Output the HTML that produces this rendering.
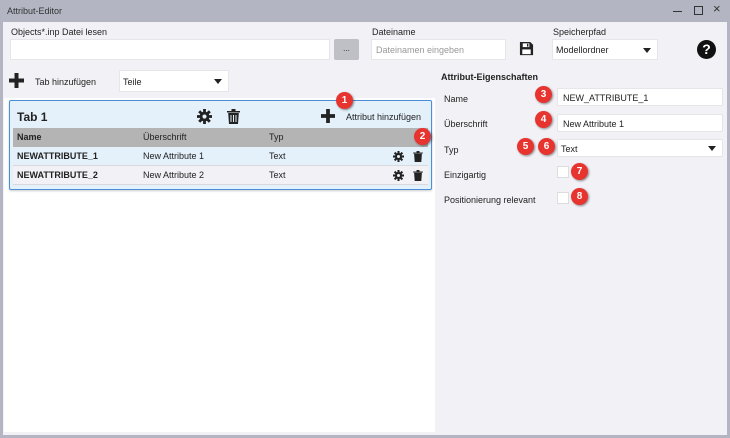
<!DOCTYPE html>
<html><head><meta charset="utf-8"><style>
*{box-sizing:border-box;margin:0;padding:0}
body{width:730px;height:438px;overflow:hidden;font-family:"Liberation Sans",sans-serif;font-size:9px;color:#222;background:#6b6f7a}
.win{position:absolute;left:0;top:0;width:730px;height:438px;background:#b3b6c2;}
.in{position:absolute;left:3px;top:22px;width:724px;height:413px;background:#f2f1f6}
.a{position:absolute}
.inp{position:absolute;background:#fff;border:1px solid #e6e6ea}
.arr{position:absolute;right:6px;top:50%;margin-top:-2px;width:0;height:0;border-left:4px solid transparent;border-right:4px solid transparent;border-top:5px solid #222}
.badge{position:absolute;width:17px;height:17px;border-radius:50%;background:#e8342f;color:#fff;font-weight:bold;font-size:10px;text-align:center;line-height:17px;box-shadow:1px 1px 2px rgba(0,0,0,.45)}
.cb{position:absolute;width:12px;height:12px;background:#fff;border:1px solid #ddd}
.row{position:absolute;left:13px;width:415px;height:19px;line-height:19px;border-bottom:1px solid #d8d8de}
.row span{position:absolute}
</style></head><body>
<div class="win">
<div class="a" style="left:7px;top:6px;font-size:9px;color:#333">Attribut-Editor</div>
<div class="a" style="left:673px;top:11px;width:9px;height:1px;background:#333"></div>
<div class="a" style="left:694px;top:6px;width:9px;height:9px;border:1px solid #333"></div>
<div class="a" style="left:713px;top:1px;font-size:13px;color:#333">×</div>
<div class="in">
<div class="a" style="left:8px;top:5px">Objects*.inp Datei lesen</div>
<div class="inp" style="left:7px;top:17px;width:320px;height:21px"></div>
<div class="a" style="left:331px;top:17px;width:25px;height:21px;background:#bfc0c6;border-radius:2px;text-align:center;line-height:19px;font-size:8px">...</div>
<div class="a" style="left:369px;top:5px">Dateiname</div>
<div class="inp" style="left:368px;top:17px;width:135px;height:21px;color:#999;padding:5px 4px">Dateinamen eingeben</div>
<svg class="a" style="left:516px;top:19px" width="15" height="15" viewBox="0 0 16 16"><path d="M1 1h11l3 3v11H1z" fill="#222"/><rect x="4" y="2.5" width="7" height="4" fill="#fff"/><rect x="8.5" y="3" width="1.5" height="3" fill="#222"/><rect x="3.5" y="9" width="9" height="5" fill="#fff"/></svg>
<div class="a" style="left:550px;top:5px">Speicherpfad</div>
<div class="inp" style="left:549px;top:17px;width:106px;height:21px;padding:5px 3px">Modellordner<span class="arr"></span></div>
<div class="a" style="left:694px;top:18px;width:19px;height:19px;border-radius:50%;background:#111;color:#fff;font-weight:bold;font-size:14px;text-align:center;line-height:19px">?</div>

<svg class="a" style="left:6px;top:51px" width="15" height="15" viewBox="0 0 15 15"><path d="M5.5 0h4v5.5H15v4H9.5V15h-4V9.5H0v-4h5.5z" fill="#222"/></svg>
<div class="a" style="left:32px;top:55px">Tab hinzufügen</div>
<div class="inp" style="left:116px;top:48px;width:110px;height:22px;padding:6px 3px">Teile<span class="arr"></span></div>

<div class="a" style="left:1px;top:76px;width:431px;height:334px;background:#fff"></div>
<div class="a" style="left:6px;top:78px;width:423px;height:90px;background:#e4f1fb;border:1px solid #4a8fd6;border-radius:2px;box-shadow:0 1px 2px rgba(0,0,0,.2)"></div>
<div class="a" style="left:14px;top:88px;font-size:12px;font-weight:bold">Tab 1</div>
<svg class="a" style="left:194px;top:87px" width="15" height="15" viewBox="0 0 16 16"><g fill="#222"><circle cx="8" cy="8" r="5.2"/><rect x="6.5" y="0" width="3" height="16"/><rect x="0" y="6.5" width="16" height="3"/><rect x="6.5" y="0" width="3" height="16" transform="rotate(45 8 8)"/><rect x="0" y="6.5" width="16" height="3" transform="rotate(45 8 8)"/></g><circle cx="8" cy="8" r="2.2" fill="#e4f1fb"/></svg>
<svg class="a" style="left:224px;top:87px" width="13" height="15" viewBox="0 0 13 15"><path d="M0 2h13v1.5H0zM4.5 0h4v2h-4zM1.2 4h10.6l-.8 11H2z" fill="#222"/><path d="M4 6v7M6.5 6v7M9 6v7" stroke="#e4f1fb" stroke-width="1"/></svg>
<svg class="a" style="left:318px;top:87px" width="14" height="14" viewBox="0 0 15 15"><path d="M5.5 0h4v5.5H15v4H9.5V15h-4V9.5H0v-4h5.5z" fill="#222"/></svg>
<div class="a" style="left:343px;top:90px">Attribut hinzufügen</div>
<div class="a" style="left:10px;top:106px;width:415px;height:19px;background:#b4b4b4"></div>
<div class="a" style="left:14px;top:110px;font-weight:bold">Name</div>
<div class="a" style="left:140px;top:110px">Überschrift</div>
<div class="a" style="left:266px;top:110px">Typ</div>
<div class="row" style="left:10px;top:125px;background:#e4f1fb"><span style="left:4px;font-weight:bold">NEWATTRIBUTE_1</span><span style="left:130px">New Attribute 1</span><span style="left:256px">Text</span></div>
<div class="row" style="left:10px;top:144px;background:#f1f1f6"><span style="left:4px;font-weight:bold">NEWATTRIBUTE_2</span><span style="left:130px">New Attribute 2</span><span style="left:256px">Text</span></div>
<svg class="a" style="left:390px;top:129px" width="11" height="11" viewBox="0 0 16 16"><g fill="#222"><circle cx="8" cy="8" r="5.2"/><rect x="6.5" y="0" width="3" height="16"/><rect x="0" y="6.5" width="16" height="3"/><rect x="6.5" y="0" width="3" height="16" transform="rotate(45 8 8)"/><rect x="0" y="6.5" width="16" height="3" transform="rotate(45 8 8)"/></g><circle cx="8" cy="8" r="2.2" fill="#e4f1fb"/></svg>
<svg class="a" style="left:410px;top:129px" width="10" height="11" viewBox="0 0 13 15"><path d="M0 2h13v1.5H0zM4.5 0h4v2h-4zM1.2 4h10.6l-.8 11H2z" fill="#222"/></svg>
<svg class="a" style="left:390px;top:148px" width="11" height="11" viewBox="0 0 16 16"><g fill="#222"><circle cx="8" cy="8" r="5.2"/><rect x="6.5" y="0" width="3" height="16"/><rect x="0" y="6.5" width="16" height="3"/><rect x="6.5" y="0" width="3" height="16" transform="rotate(45 8 8)"/><rect x="0" y="6.5" width="16" height="3" transform="rotate(45 8 8)"/></g><circle cx="8" cy="8" r="2.2" fill="#f1f1f6"/></svg>
<svg class="a" style="left:410px;top:148px" width="10" height="11" viewBox="0 0 13 15"><path d="M0 2h13v1.5H0zM4.5 0h4v2h-4zM1.2 4h10.6l-.8 11H2z" fill="#222"/></svg>
<div class="badge" style="left:333px;top:70px">1</div>
<div class="badge" style="left:411px;top:106px">2</div>

<div class="a" style="left:438px;top:50px;font-weight:bold">Attribut-Eigenschaften</div>
<div class="a" style="left:441px;top:72px">Name</div>
<div class="inp" style="left:554px;top:66px;width:166px;height:18px;padding:4px 5px">NEW_ATTRIBUTE_1</div>
<div class="a" style="left:441px;top:97px">Überschrift</div>
<div class="inp" style="left:554px;top:92px;width:166px;height:18px;padding:4px 5px">New Attribute 1</div>
<div class="a" style="left:441px;top:123px">Typ</div>
<div class="inp" style="left:554px;top:117px;width:166px;height:18px;padding:4px 3px">Text<span class="arr"></span></div>
<div class="a" style="left:441px;top:148px">Einzigartig</div>
<div class="a" style="left:441px;top:173px">Positionierung relevant</div>
<div class="cb" style="left:554px;top:144px"></div>
<div class="cb" style="left:554px;top:170px"></div>
<div class="badge" style="left:532px;top:64px">3</div>
<div class="badge" style="left:532px;top:89px">4</div>
<div class="badge" style="left:514px;top:116px">5</div>
<div class="badge" style="left:535px;top:116px">6</div>
<div class="badge" style="left:568px;top:141px">7</div>
<div class="badge" style="left:568px;top:166px">8</div>
</div></div>
</body></html>
